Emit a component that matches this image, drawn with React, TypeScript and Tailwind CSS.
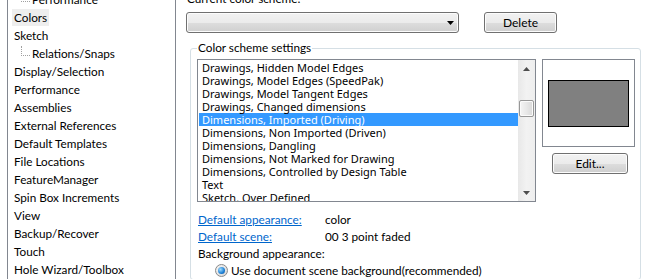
import React from 'react';

type TreeItem = { t: string; child?: boolean; sel?: boolean };

const tree: TreeItem[] = [
  { t: 'Performance', child: true },
  { t: 'Colors', sel: true },
  { t: 'Sketch' },
  { t: 'Relations/Snaps', child: true },
  { t: 'Display/Selection' },
  { t: 'Performance' },
  { t: 'Assemblies' },
  { t: 'External References' },
  { t: 'Default Templates' },
  { t: 'File Locations' },
  { t: 'FeatureManager' },
  { t: 'Spin Box Increments' },
  { t: 'View' },
  { t: 'Backup/Recover' },
  { t: 'Touch' },
  { t: 'Hole Wizard/Toolbox' },
];

const listItems = [
  'Drawings, Hidden Model Edges',
  'Drawings, Model Edges (SpeedPak)',
  'Drawings, Model Tangent Edges',
  'Drawings, Changed dimensions',
  'Dimensions, Imported (Driving)',
  'Dimensions, Non Imported (Driven)',
  'Dimensions, Dangling',
  'Dimensions, Not Marked for Drawing',
  'Dimensions, Controlled by Design Table',
  'Text',
  'Sketch. Over Defined',
];

function Tree() {
  return (
    <div className="ml-[7px] w-[169px] h-full shrink-0 overflow-hidden border-x border-[#828790] bg-white">
      <div className="-mt-[10px] flex flex-col">
        {tree.map((it, i) => (
          <div key={i} className={`flex h-[18px] items-center ${it.child ? 'pl-[13px]' : 'pl-[4px]'}`}>
            {it.child && (
              <span className="self-start mt-[2px] h-[10px] w-[9px] border-l border-b border-dotted border-[#a0a0a0]" />
            )}
            <span className={`px-[2px] leading-[17px] whitespace-nowrap ${it.sel ? 'bg-[#eeeeee]' : ''}`}>{it.t}</span>
          </div>
        ))}
      </div>
    </div>
  );
}

function Win7Button({ label, w }: { label: string; w: string }) {
  return (
    <div
      className={`${w} h-[21px] flex items-center justify-center rounded-[3px] border border-[#707070] bg-[linear-gradient(#f2f2f2,#ebebeb_50%,#dddddd_52%,#cfcfcf)] shadow-[inset_0_0_0_1px_#fcfcfc] text-[12px] leading-none`}
    >
      {label}
    </div>
  );
}

function ListBox() {
  return (
    <div className="w-[339px] h-[143px] border border-[#828790] flex bg-white">
      <div className="flex-1 pt-[1px] pl-[1px] overflow-hidden font-['Noto_Sans',sans-serif] text-[11px]">
        {listItems.map((t, i) => (
          <div
            key={i}
            className={`h-[13px] leading-[13px] pl-[3px] whitespace-nowrap ${i === 4 ? 'bg-[#3399ff] text-white' : ''}`}
          >
            {t}
          </div>
        ))}
      </div>
      <div className="w-[17px] h-full bg-gradient-to-r from-[#e8e8e8] via-[#f2f2f2] to-[#eeeeee] flex flex-col items-center">
        <div className="h-[17px] w-full flex items-center justify-center">
          <svg width="7" height="4" viewBox="0 0 7 4"><path d="M0 4 L3.5 0 L7 4 Z" fill="#4d4d4d" /></svg>
        </div>
        <div className="mt-[23px] w-[15px] h-[17px] rounded-[2px] border border-[#979797] bg-gradient-to-r from-[#f5f5f5] via-[#e8e8e8] to-[#d9d9d9] shadow-[inset_0_0_0_1px_#fbfbfb]" />
        <div className="flex-1" />
        <div className="h-[17px] w-full flex items-center justify-center">
          <svg width="7" height="4" viewBox="0 0 7 4"><path d="M0 0 L7 0 L3.5 4 Z" fill="#4d4d4d" /></svg>
        </div>
      </div>
    </div>
  );
}

export default function App() {
  return (
    <div className="w-[652px] h-[279px] overflow-hidden bg-white flex font-['Lato',sans-serif] text-[11.75px] text-black">
      <Tree />
      <div className="ml-[10px] flex-1 flex flex-col">
        <div className="-mt-[9px] h-[16px] leading-[16px] pl-[1px]">Current color scheme:</div>
        <div className="mt-[5px] flex items-start">
          <div className="w-[273px] h-[21px] rounded-[3px] border border-[#707070] bg-[linear-gradient(#f2f2f2,#ebebeb_50%,#dddddd_52%,#cfcfcf)] shadow-[inset_0_0_0_1px_#fcfcfc] flex items-center justify-end pr-[4px]">
            <svg width="7" height="4" viewBox="0 0 7 4"><path d="M0 0 L7 0 L3.5 4 Z" fill="#000" /></svg>
          </div>
          <div className="ml-[25px]">
            <Win7Button label="Delete" w="w-[73px]" />
          </div>
        </div>
        <fieldset className="mt-[7px] ml-[4px] w-[451px] flex-1 rounded-[3px] border border-[#d5dfe5] pl-[6px] pb-0">
          <legend className="px-[1px] leading-[16px]">Color scheme settings</legend>
          <div className="mt-[3px] flex items-start">
            <div className="flex flex-col">
              <ListBox />
              <div className="mt-[9px] pl-[1px] flex flex-col leading-[17px]">
                <div className="flex h-[17px]">
                  <span className="w-[127px] text-[#0066cc] underline">Default appearance:</span>
                  <span>color</span>
                </div>
                <div className="flex h-[17px]">
                  <span className="w-[127px] text-[#0066cc] underline">Default scene:</span>
                  <span>00 3 point faded</span>
                </div>
                <div className="h-[17px]">Background appearance:</div>
                <div className="h-[17px] flex items-center pl-[17px]">
                  <span className="w-[13px] h-[13px] rounded-full border border-[#8a8a8a] bg-gradient-to-br from-[#f4f4f4] to-[#d8d8d8] flex items-center justify-center">
                    <span className="w-[7px] h-[7px] rounded-full bg-[radial-gradient(circle_at_35%_35%,#9fdcff,#1c7fd4_60%,#0b4f9e)]" />
                  </span>
                  <span className="ml-[3px]">Use document scene background(recommended)</span>
                </div>
              </div>
            </div>
            <div className="ml-[6px] flex flex-col">
              <div className="w-[93px] h-[88px] border border-[#828790] flex items-center justify-center">
                <div className="w-[81px] h-[47px] border border-black bg-[#808080]" />
              </div>
              <div className="mt-[6px] ml-[10px]">
                <Win7Button label="Edit..." w="w-[76px]" />
              </div>
            </div>
          </div>
        </fieldset>
      </div>
    </div>
  );
}
